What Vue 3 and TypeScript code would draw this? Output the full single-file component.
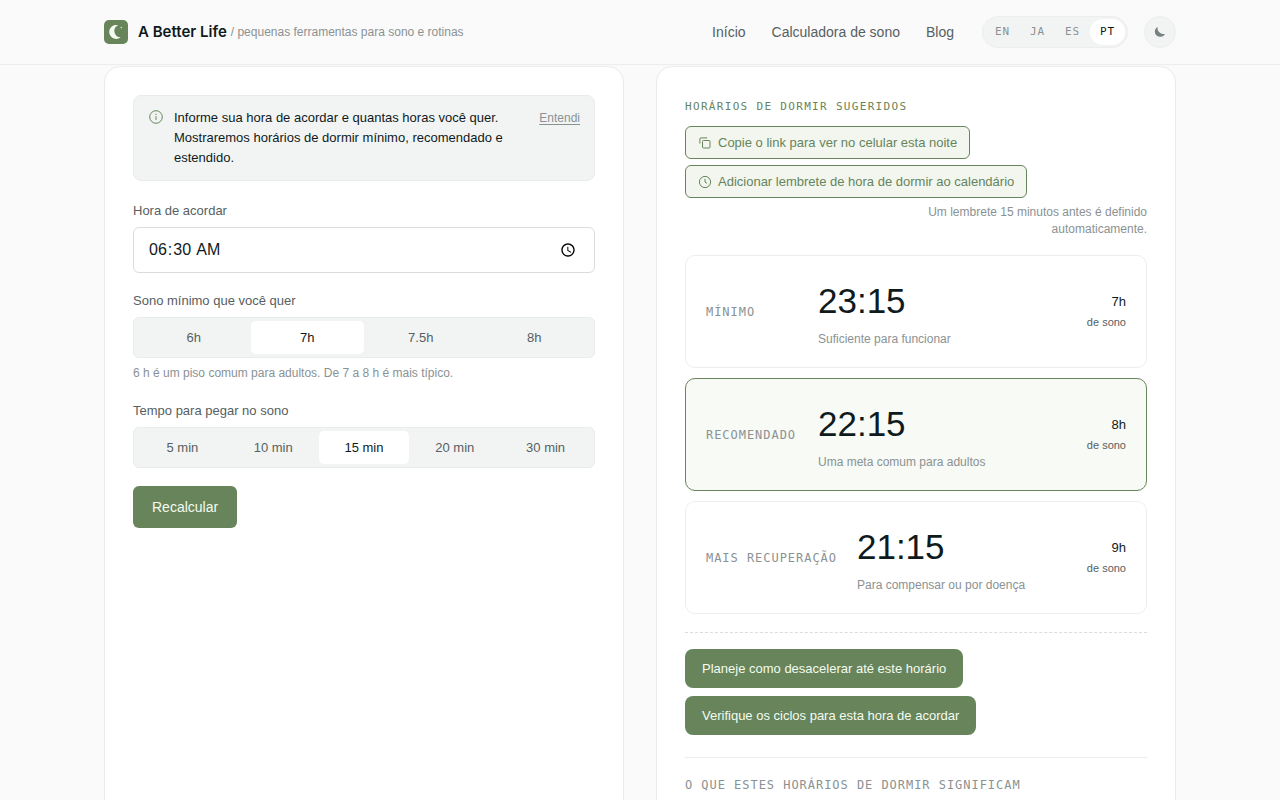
<script setup lang="ts">
import { ref } from 'vue'

interface Bedtime {
  label: string
  time: string
  note: string
  hours: string
  recommended?: boolean
}

const navLinks = ['Início', 'Calculadora de sono', 'Blog']
const languages = ['EN', 'JA', 'ES', 'PT']
const sleepOptions = ['6h', '7h', '7.5h', '8h']
const latencyOptions = ['5 min', '10 min', '15 min', '20 min', '30 min']

const language = ref('PT')
const wakeTime = ref('06:30')
const minimumSleep = ref('7h')
const latency = ref('15 min')

const bedtimes: Bedtime[] = [
  { label: 'Mínimo', time: '23:15', note: 'Suficiente para funcionar', hours: '7h' },
  { label: 'Recomendado', time: '22:15', note: 'Uma meta comum para adultos', hours: '8h', recommended: true },
  { label: 'Mais recuperação', time: '21:15', note: 'Para compensar ou por doença', hours: '9h' },
]
</script>

<template>
  <div class="page">
    <header class="site-header">
      <div class="container header-row">
        <a class="brand" href="#">
          <svg class="logo" viewBox="0 0 24 24" aria-hidden="true">
            <rect width="24" height="24" rx="5" fill="#67845b" />
            <path d="M14.2 5.2a7 7 0 1 0 2.5 12.1A6.3 6.3 0 0 1 14.2 5.2z" fill="#f4fbf0" />
            <circle cx="17.3" cy="7.6" r="0.8" fill="#d5e4cd" />
          </svg>
          <span class="brand-name">A Better Life</span>
          <span class="tagline">/ pequenas ferramentas para sono e rotinas</span>
        </a>
        <nav class="nav">
          <a v-for="link in navLinks" :key="link" href="#">{{ link }}</a>
        </nav>
        <div class="languages">
          <button
            v-for="code in languages"
            :key="code"
            type="button"
            :class="{ active: code === language }"
            @click="language = code"
          >{{ code }}</button>
        </div>
        <button class="theme" type="button" aria-label="Modo escuro">
          <svg viewBox="0 0 14 14" aria-hidden="true">
            <path d="M4.6 1.7A5.4 5.4 0 1 0 12 8.9 6.2 6.2 0 0 1 4.6 1.7z" fill="#788081" />
          </svg>
        </button>
      </div>
    </header>

    <main class="container panels">
      <section class="panel">
        <div class="notice">
          <svg class="notice-icon" viewBox="0 0 16 16" fill="none" stroke="#67845b" aria-hidden="true">
            <circle cx="8" cy="8" r="6.3" />
            <path d="M8 7.2v3.8M8 4.8v1.2" />
          </svg>
          <p>Informe sua hora de acordar e quantas horas você quer. Mostraremos horários de dormir mínimo, recomendado e estendido.</p>
          <button type="button">Entendi</button>
        </div>

        <form class="form" @submit.prevent>
          <div class="field">
            <label for="wake">Hora de acordar</label>
            <input id="wake" v-model="wakeTime" type="time" />
          </div>

          <div class="field">
            <span id="sleep-label">Sono mínimo que você quer</span>
            <div class="segments" role="group" aria-labelledby="sleep-label">
              <button
                v-for="option in sleepOptions"
                :key="option"
                type="button"
                :class="{ active: option === minimumSleep }"
                @click="minimumSleep = option"
              >{{ option }}</button>
            </div>
            <p class="hint">6 h é um piso comum para adultos. De 7 a 8 h é mais típico.</p>
          </div>

          <div class="field">
            <span id="latency-label">Tempo para pegar no sono</span>
            <div class="segments" role="group" aria-labelledby="latency-label">
              <button
                v-for="option in latencyOptions"
                :key="option"
                type="button"
                :class="{ active: option === latency }"
                @click="latency = option"
              >{{ option }}</button>
            </div>
          </div>

          <button class="submit" type="submit">Recalcular</button>
        </form>
      </section>

      <section class="panel">
        <h2 class="eyebrow">Horários de dormir sugeridos</h2>
        <div class="actions">
          <button class="outline" type="button">
            <svg viewBox="0 0 14 14" fill="none" stroke="currentColor" aria-hidden="true">
              <rect x="4.5" y="4.5" width="7.5" height="7.5" rx="1" />
              <path d="M1.9 7.6V2.9a1 1 0 0 1 1-1h6.2" />
            </svg>
            Copie o link para ver no celular esta noite
          </button>
          <button class="outline" type="button">
            <svg viewBox="0 0 14 14" fill="none" stroke="currentColor" aria-hidden="true">
              <circle cx="7" cy="7" r="5.6" />
              <path d="M7 3.9V7l2 1.3" />
            </svg>
            Adicionar lembrete de hora de dormir ao calendário
          </button>
          <p class="reminder">Um lembrete 15 minutos antes é definido automaticamente.</p>
        </div>

        <div class="results">
          <article
            v-for="item in bedtimes"
            :key="item.label"
            class="result"
            :class="{ recommended: item.recommended }"
          >
            <span class="result-label">{{ item.label }}</span>
            <div>
              <div class="result-time">{{ item.time }}</div>
              <div class="result-note">{{ item.note }}</div>
            </div>
            <div class="result-hours">
              <strong>{{ item.hours }}</strong>
              <span>de sono</span>
            </div>
          </article>
        </div>

        <div class="next">
          <a href="#">Planeje como desacelerar até este horário</a>
          <a href="#">Verifique os ciclos para esta hora de acordar</a>
        </div>

        <h3 class="meaning">O que estes horários de dormir significam</h3>
      </section>
    </main>
  </div>
</template>

<style>
body {
  margin: 0;
  background: #fafafa;
}
</style>

<style scoped>
.page {
  height: 100vh;
  overflow: hidden;
  background: #fafafa;
  color: #0f1a1c;
  font-family: "Liberation Sans", Arial, sans-serif;
  font-size: 13px;
  line-height: 20px;
}

*,
*::before,
*::after {
  box-sizing: border-box;
}

p,
h2,
h3 {
  margin: 0;
  font-weight: 400;
}

button,
input {
  font: inherit;
  color: inherit;
}

button {
  padding: 0;
  border: 0;
  background: none;
  cursor: pointer;
}

a {
  color: inherit;
  text-decoration: none;
}

.container {
  max-width: 1120px;
  margin: 0 auto;
  padding: 0 24px;
}

.site-header {
  border-bottom: 1px solid #eceeee;
}

.header-row {
  display: flex;
  align-items: center;
  height: 64px;
}

.brand {
  display: flex;
  align-items: center;
  white-space: nowrap;
}

.logo {
  width: 24px;
  height: 24px;
  margin-right: 10px;
}

.brand-name {
  margin-right: 4px;
  font-family: Inter, sans-serif;
  font-size: 15px;
  font-weight: 600;
}

.tagline {
  color: #8a9293;
  font-size: 12px;
}

.nav {
  display: flex;
  gap: 26px;
  margin-left: auto;
  color: #566062;
  font-size: 14px;
}

.languages {
  display: flex;
  height: 32px;
  margin: 0 16px 0 28px;
  padding: 2px;
  border: 1px solid #eceeee;
  border-radius: 16px;
  background: #f2f4f4;
}

.languages button {
  width: 35px;
  border-radius: 13px;
  color: #8a9293;
  font-family: "DejaVu Sans Mono", monospace;
  font-size: 11px;
  letter-spacing: 0.08em;
}

.languages .active {
  background: #fff;
  color: #0f1a1c;
}

.theme {
  display: grid;
  place-items: center;
  width: 32px;
  height: 32px;
  border: 1px solid #eceeee;
  border-radius: 50%;
  background: #f2f4f4;
}

.theme svg {
  width: 14px;
  height: 14px;
}

.panels {
  display: grid;
  grid-template-columns: 1fr 1fr;
  gap: 32px;
  margin-top: 1px;
}

.panel {
  padding: 28px;
  border: 1px solid #e9ecec;
  border-radius: 16px;
  background: #fff;
}

.notice {
  display: flex;
  align-items: flex-start;
  gap: 10px;
  margin-bottom: 20px;
  padding: 12px 14px;
  border: 1px solid #e9ecec;
  border-radius: 8px;
  background: #f2f4f4;
}

.notice-icon {
  flex: none;
  width: 16px;
  height: 16px;
  margin-top: 1px;
}

.notice p {
  flex: 1;
}

.notice button {
  color: #8a9293;
  font-size: 12px;
  text-decoration: underline;
  text-underline-offset: 2px;
}

.form {
  display: flex;
  flex-direction: column;
  align-items: stretch;
  gap: 18px;
}

.field {
  display: flex;
  flex-direction: column;
  gap: 6px;
  color: #566062;
}

.field input {
  height: 46px;
  padding: 0 14px;
  border: 1px solid #d9dddd;
  border-radius: 6px;
  background: #fff;
  color: #0f1a1c;
  font-size: 16px;
}

.segments {
  display: grid;
  grid-auto-flow: column;
  grid-auto-columns: 1fr;
  padding: 3px;
  border: 1px solid #e9ecec;
  border-radius: 6px;
  background: #f2f4f4;
}

.segments button {
  height: 33px;
  border-radius: 5px;
}

.segments .active {
  background: #fff;
  color: #0f1a1c;
}

.hint {
  color: #8a9293;
  font-size: 12px;
  line-height: 19px;
}

.submit {
  align-self: flex-start;
  height: 42px;
  padding: 0 19px;
  border-radius: 6px;
  background: #67845b;
  color: #f4fbf0;
  font-size: 14px;
}

.eyebrow {
  margin: 2px 0 9px;
  color: #67845b;
  font-family: "DejaVu Sans Mono", monospace;
  font-size: 11px;
  letter-spacing: 0.12em;
  text-transform: uppercase;
}

.actions {
  display: flex;
  flex-direction: column;
  align-items: flex-start;
  gap: 6px;
}

.outline {
  display: flex;
  align-items: center;
  gap: 6px;
  height: 33px;
  padding: 0 12px;
  border: 1px solid #67845b;
  border-radius: 6px;
  background: #f2f6ef;
  color: #67845b;
}

.outline svg {
  width: 14px;
  height: 14px;
}

.reminder {
  align-self: flex-end;
  max-width: 240px;
  color: #8a9293;
  font-size: 12px;
  line-height: 17px;
  text-align: right;
}

.results {
  display: grid;
  gap: 10px;
  margin-top: 17px;
}

.result {
  display: grid;
  grid-template-columns: minmax(92px, auto) 1fr auto;
  align-items: center;
  gap: 20px;
  padding: 20px;
  border: 1px solid #eceeee;
  border-radius: 10px;
}

.recommended {
  border-color: #67845b;
  background: #f7faf5;
}

.result-label {
  color: #8a9293;
  font-family: "DejaVu Sans Mono", monospace;
  font-size: 12px;
  letter-spacing: 0.08em;
  text-transform: uppercase;
}

.result-time {
  font-size: 35px;
  line-height: 50px;
}

.result-note {
  margin-top: 5px;
  color: #8a9293;
  font-size: 12px;
  line-height: 16px;
}

.result-hours {
  display: grid;
  color: #566062;
  font-size: 11px;
  line-height: 21px;
  text-align: right;
}

.result-hours strong {
  color: #0f1a1c;
  font-size: 13px;
  font-weight: 400;
}

.next {
  display: flex;
  flex-direction: column;
  align-items: flex-start;
  gap: 8px;
  margin-top: 18px;
  padding: 16px 0 22px;
  border-top: 1px dashed #d9dddd;
  border-bottom: 1px solid #eceeee;
}

.next a {
  padding: 10px 17px 9px;
  border-radius: 8px;
  background: #67845b;
  color: #f4fbf0;
}

.meaning {
  margin-top: 17px;
  color: #8a9293;
  font-family: "DejaVu Sans Mono", monospace;
  font-size: 12px;
  letter-spacing: 0.08em;
  text-transform: uppercase;
}
</style>
